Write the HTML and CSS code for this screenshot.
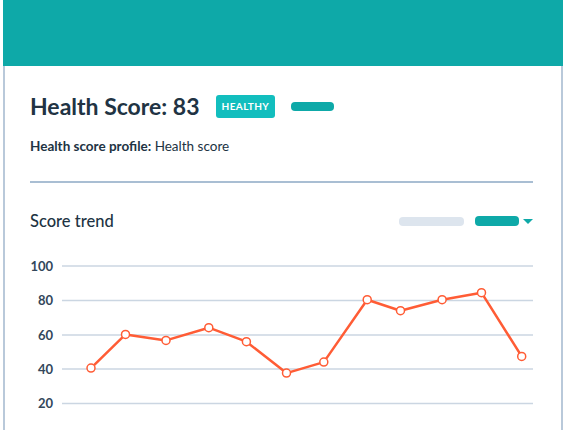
FILE: index.html
```html
<!DOCTYPE html>
<html>
<head>
<meta charset="utf-8">
<link rel="stylesheet" href="styles.css">
</head>
<body>
<div class="card">
  <div class="card-header"></div>
  <div class="card-body">
    <div class="title-row">
      <h1 class="title">Health Score: 83</h1>
      <span class="badge">HEALTHY</span>
      <span class="pill pill-teal pill-title"></span>
    </div>
    <p class="profile"><strong>Health score profile:</strong> Health score</p>
    <hr class="divider">
    <div class="trend-row">
      <h2 class="trend-title">Score trend</h2>
      <div class="trend-controls">
        <span class="pill pill-gray"></span>
        <span class="pill pill-teal pill-select"></span>
        <span class="caret"></span>
      </div>
    </div>
    <svg class="chart" width="503" height="170" viewBox="0 0 503 170">
      <g class="grid">
        <line x1="32" y1="16" x2="503" y2="16"/>
        <line x1="32" y1="50.5" x2="503" y2="50.5"/>
        <line x1="32" y1="85" x2="503" y2="85"/>
        <line x1="32" y1="119" x2="503" y2="119"/>
        <line x1="32" y1="153.5" x2="503" y2="153.5"/>
      </g>
      <g class="labels">
        <text x="23" y="20.5">100</text>
        <text x="23" y="55">80</text>
        <text x="23" y="89.5">60</text>
        <text x="23" y="123.5">40</text>
        <text x="23" y="158">20</text>
      </g>
      <polyline class="series" points="61,118.1 95.5,84.4 136,90.4 178.8,77.7 216.4,91.7 256.5,123.1 293.8,112.1 337.2,49.7 370.5,60.7 412.1,49.7 451.5,42.7 491.7,106.4"/>
      <g class="dots">
        <circle cx="61" cy="118.1" r="4"/>
        <circle cx="95.5" cy="84.4" r="4"/>
        <circle cx="136" cy="90.4" r="4"/>
        <circle cx="178.8" cy="77.7" r="4"/>
        <circle cx="216.4" cy="91.7" r="4"/>
        <circle cx="256.5" cy="123.1" r="4"/>
        <circle cx="293.8" cy="112.1" r="4"/>
        <circle cx="337.2" cy="49.7" r="4"/>
        <circle cx="370.5" cy="60.7" r="4"/>
        <circle cx="412.1" cy="49.7" r="4"/>
        <circle cx="451.5" cy="42.7" r="4"/>
        <circle cx="491.7" cy="106.4" r="4"/>
      </g>
    </svg>
  </div>
</div>
</body>
</html>
```

FILE: styles.css
```css
* { box-sizing: border-box; }
html, body { margin: 0; padding: 0; background: #ffffff; }
body {
  font-family: "Lato", "Noto Sans", sans-serif;
  color: #213343;
  overflow: hidden;
}
.card {
  margin-left: 3px;
  width: 560px;
}
.card-header {
  height: 66px;
  background: #0ea9a8;
}
.card-body {
  border-left: 2px solid #b9c9da;
  border-right: 2px solid #b9c9da;
  padding: 28px 28px 40px 25px;
  min-height: 400px;
}
.title-row {
  display: flex;
  align-items: center;
  height: 24px;
}
.title {
  margin: 0;
  font-size: 23px;
  font-weight: 700;
  line-height: 24px;
  color: #213343;
}
.badge {
  margin-left: 16px;
  height: 23px;
  padding: 0 6px;
  display: inline-flex;
  align-items: center;
  background: #12bebe;
  color: #ffffff;
  font-size: 10px;
  font-weight: 700;
  letter-spacing: 0.4px;
  border-radius: 3px;
}
.pill {
  display: inline-block;
  border-radius: 4px;
}
.pill-teal { background: #0ea9a8; }
.pill-title {
  margin-left: 16px;
  width: 43px;
  height: 9px;
}
.profile {
  margin: 19px 0 0 0;
  font-size: 13.5px;
  line-height: 18px;
  color: #213343;
}
.profile strong { font-weight: 700; }
.divider {
  margin: 26px 0 0 0;
  border: 0;
  height: 2px;
  background: #a9bed3;
}
.trend-row {
  display: flex;
  align-items: center;
  justify-content: space-between;
  margin-top: 28px;
  height: 20px;
}
.trend-title {
  margin: 0;
  font-size: 16.5px;
  font-weight: 500;
  color: #213343;
}
.trend-controls {
  display: flex;
  align-items: center;
}
.pill-gray {
  width: 65px;
  height: 9px;
  background: #dde5ee;
}
.pill-select {
  margin-left: 11px;
  width: 44px;
  height: 10px;
}
.caret {
  margin-left: 4px;
  width: 0;
  height: 0;
  border-left: 5px solid transparent;
  border-right: 5px solid transparent;
  border-top: 5px solid #0ea9a8;
}
.chart {
  display: block;
  margin-top: 19px;
}
.grid line {
  stroke: #cbd6e2;
  stroke-width: 1.5;
}
.labels text {
  font-family: "Lato", "Noto Sans", sans-serif;
  font-size: 13px;
  font-weight: 700;
  fill: #33475b;
  text-anchor: end;
}
.series {
  fill: none;
  stroke: #ff5c35;
  stroke-width: 2.5;
  stroke-linejoin: round;
}
.dots circle {
  fill: #ffffff;
  stroke: #ff5c35;
  stroke-width: 1.5;
}
```
